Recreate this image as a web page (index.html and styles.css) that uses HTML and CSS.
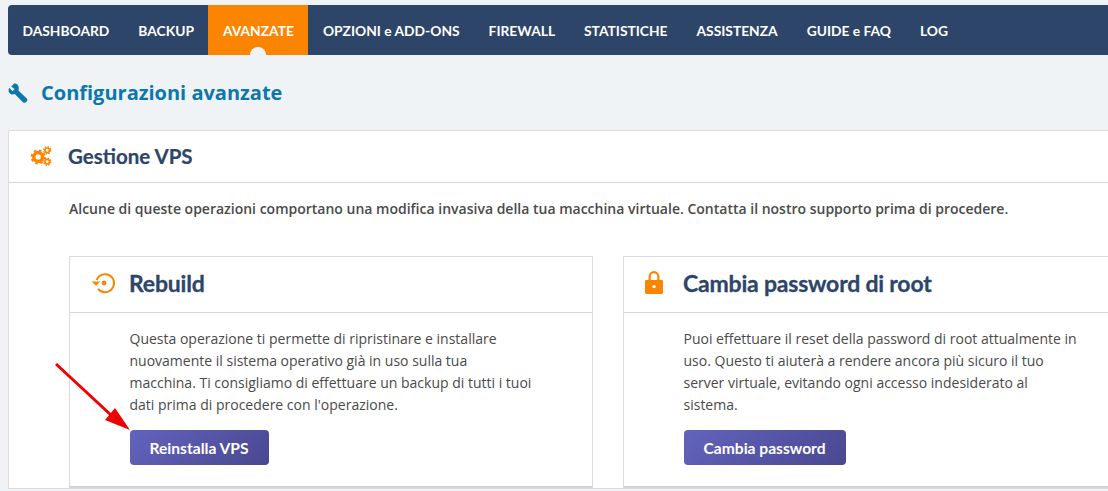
FILE: index.html
```html
<!DOCTYPE html>
<html lang="it">
<head>
  <meta charset="UTF-8">
  <title>Configurazioni avanzate</title>
  <link rel="stylesheet" href="styles.css">
</head>
<body>
  <div class="page">
    <nav class="menu">
      <a href="#">DASHBOARD</a>
      <a href="#">BACKUP</a>
      <a href="#" class="active">AVANZATE</a>
      <a href="#">OPZIONI e ADD-ONS</a>
      <a href="#">FIREWALL</a>
      <a href="#">STATISTICHE</a>
      <a href="#">ASSISTENZA</a>
      <a href="#">GUIDE e FAQ</a>
      <a href="#">LOG</a>
    </nav>

    <h1 class="page-title">
      <svg class="wrench" viewBox="0 0 20 20" width="20" height="20"><path fill="#0a77ad" d="M6.2 0.4 L3.2 3.4 L6.6 6 L4.6 8.2 L1.2 4.8 C-0.2 7.6 0.8 10.4 3.2 11.2 C4.4 11.6 5.6 11.5 6.8 11 L15.2 19.4 C16 20 17 20 17.8 19.2 L18.8 18.2 C19.6 17.4 19.6 16.4 18.8 15.6 L10.4 7.4 C11.4 4.6 10.4 1.8 8.2 0.8 C7.6 0.5 6.9 0.4 6.2 0.4 Z"/></svg>
      Configurazioni avanzate
    </h1>

    <section class="panel">
      <header class="panel-head">
        <svg class="gears" viewBox="0 0 23 21" width="22" height="20">
          <g fill="none" stroke="#fb8500">
            <circle cx="8.5" cy="11.5" r="4.6" stroke-width="3.6"/>
            <circle cx="8.5" cy="11.5" r="6.8" stroke-width="2.2" stroke-dasharray="2.7 2.64"/>
            <circle cx="18" cy="4.5" r="2.4" stroke-width="1.7"/>
            <circle cx="18" cy="4.5" r="3.7" stroke-width="1.4" stroke-dasharray="1.6 1.3"/>
            <circle cx="18" cy="16.5" r="2.4" stroke-width="1.7"/>
            <circle cx="18" cy="16.5" r="3.7" stroke-width="1.4" stroke-dasharray="1.6 1.3"/>
          </g>
        </svg>
        <h2>Gestione VPS</h2>
      </header>
      <div class="panel-body">
        <p class="intro">Alcune di queste operazioni comportano una modifica invasiva della tua macchina virtuale. Contatta il nostro supporto prima di procedere.</p>
        <div class="cards">
          <article class="card">
            <header class="card-head">
              <svg class="icon" viewBox="0 0 24 22" width="24" height="22">
                <path fill="none" stroke="#fb8500" stroke-width="2" d="M5.6 8 A9 9 0 1 1 7 16.8"/>
                <path fill="#fb8500" d="M0.6 9.4 H9.4 L5 13.8 Z"/>
                <circle cx="13" cy="11" r="2.4" fill="#fb8500"/>
              </svg>
              <h3>Rebuild</h3>
            </header>
            <div class="card-body">
              <p>Questa operazione ti permette di ripristinare e installare nuovamente il sistema operativo già in uso sulla tua macchina. Ti consigliamo di effettuare un backup di tutti i tuoi dati prima di procedere con l'operazione.</p>
              <a href="#" class="btn">Reinstalla VPS</a>
            </div>
          </article>
          <article class="card">
            <header class="card-head">
              <svg class="icon lock" viewBox="0 0 18 23" width="18" height="23">
                <path fill="none" stroke="#fb8500" stroke-width="2.2" d="M4.6 10 V5.8 A4.4 4.6 0 0 1 13.4 5.8 V10"/>
                <rect x="0" y="9" width="18" height="14" rx="1.4" fill="#fb8500"/>
                <circle cx="9" cy="15.6" r="1.7" fill="#fff"/>
              </svg>
              <h3>Cambia password di root</h3>
            </header>
            <div class="card-body">
              <p>Puoi effettuare il reset della password di root attualmente in uso. Questo ti aiuterà a rendere ancora più sicuro il tuo server virtuale, evitando ogni accesso indesiderato al<br>sistema.</p>
              <a href="#" class="btn">Cambia password</a>
            </div>
          </article>
        </div>
      </div>
    </section>
  </div>

  <svg class="arrow" viewBox="0 0 90 90" width="90" height="90">
    <line x1="4" y1="4" x2="60" y2="56" stroke="#f00000" stroke-width="3"/>
    <path fill="#f00000" d="M78 70 L53 60 L63 48 Z"/>
  </svg>
</body>
</html>
```

FILE: styles.css
```css
* {
  box-sizing: border-box;
}
html, body {
  margin: 0;
  height: 491px;
  overflow: hidden;
}
body {
  background-color: #f0f3f5;
  color: #4a4a4a;
  font-family: "Open Sans", sans-serif;
  font-size: 14px;
  position: relative;
}
.page {
  width: 1200px;
  padding: 5px 0 0 8px;
}
.menu {
  display: flex;
  height: 50px;
  background-color: #2d4569;
  border-radius: 4px 0 0 4px;
}
.menu a {
  position: relative;
  display: flex;
  align-items: center;
  padding: 0 14.5px;
  color: #fff;
  font-family: Lato, sans-serif;
  font-size: 13.8px;
  font-weight: 700;
  text-decoration: none;
}
.menu a.active {
  background-color: #fb8500;
}
.menu a.active::after {
  content: "";
  position: absolute;
  left: 50%;
  bottom: 0;
  width: 16px;
  height: 8px;
  margin-left: -8px;
  background-color: #f0f3f5;
  border-radius: 8px 8px 0 0;
}
.page-title {
  display: flex;
  align-items: center;
  gap: 13px;
  height: 75px;
  margin: 0;
  color: #0a77ad;
  font-size: 20px;
  font-weight: 700;
}
.panel {
  background-color: #fff;
  border: 1px solid #dcdcdc;
  border-right: none;
  border-radius: 2px 0 0 0;
}
.panel-head {
  display: flex;
  align-items: center;
  height: 52px;
  padding: 0 0 2px 21px;
  gap: 16px;
  border-bottom: 1px solid #d4d4d4;
}
.panel-head h2 {
  margin: 0;
  color: #2d4569;
  font-family: Lato, sans-serif;
  font-size: 20.5px;
  font-weight: 700;
  -webkit-text-stroke: 0.2px #2d4569;
}
.panel-body {
  padding: 16px 0 0 60px;
}
.intro {
  margin: 0 0 37px;
  font-size: 14px;
  font-weight: 600;
  line-height: 20px;
}
.cards {
  display: flex;
  gap: 30px;
}
.card {
  width: 524px;
  height: 232px;
  border: 1px solid #dcdcdc;
  border-bottom: 2px solid #d4d4d4;
}
.card-head {
  display: flex;
  align-items: center;
  height: 56px;
  padding: 0 0 4px 21px;
  gap: 14px;
  border-bottom: 1px solid #d4d4d4;
}
.card-head .lock {
  margin-right: 6px;
}
.card-head h3 {
  margin: 0;
  color: #2d4569;
  font-family: Lato, sans-serif;
  font-size: 23px;
  font-weight: 700;
  letter-spacing: -0.2px;
  -webkit-text-stroke: 0.3px #2d4569;
}
.card-body {
  padding: 15px 60px 0 59.5px;
}
.card-body p {
  margin: 0 0 14px;
  font-size: 14px;
  line-height: 22px;
}
.btn {
  display: inline-flex;
  align-items: center;
  height: 35px;
  padding: 0 20px;
  color: #fff;
  font-family: Lato, sans-serif;
  font-size: 15.6px;
  font-weight: 700;
  text-decoration: none;
  background: linear-gradient(135deg, #6263bd, #4a4890);
  border-radius: 4px;
}
.arrow {
  position: absolute;
  left: 52px;
  top: 360px;
}
```
